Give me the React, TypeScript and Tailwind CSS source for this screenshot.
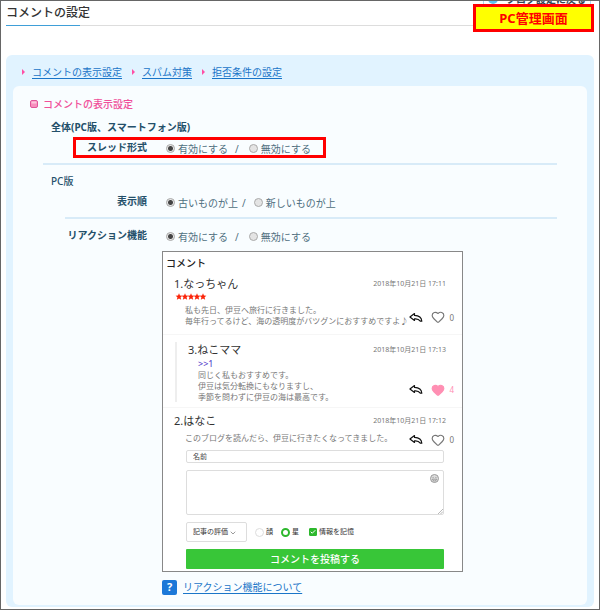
import type { ReactNode } from 'react';
import { Check, ChevronDown, Heart } from 'lucide-react';

const navLinks = ['コメントの表示設定', 'スパム対策', '拒否条件の設定'];

function ReplyIcon() {
  return (
    <svg width="14" height="11" viewBox="0 0 14 11" fill="none" stroke="#111" strokeWidth="1.2" strokeLinejoin="round">
      <path d="M5.500 1.600.9 5l4.600 3.400V6.900c2.500-.3 4.500.4 5.800 2.300h1.500C12.600 5.600 10 3.500 5.500 3.400Z" />
    </svg>
  );
}

function Stars() {
  return (
    <div className="flex h-2 items-center pl-0.5" role="img" aria-label="5">
      {[1, 2, 3, 4, 5].map(n => (
        <svg key={n} width="6" height="7" viewBox="0 0 10 10" overflow="visible" fill="#fb2409">
          <path d="M5-.6 6.600 3.200l4.100.4-3.100 2.700 1 4L5 8.200 1.400 10.300l1-4L-.7 3.600l4.100-.4Z" />
        </svg>
      ))}
    </div>
  );
}

interface CommentProps {
  title: string;
  date: string;
  likes: number;
  liked?: boolean;
  children: ReactNode;
}

function CommentHead({ title, date }: { title: string; date: string }) {
  return (
    <div className="flex items-center justify-between pr-4">
      <h4 className="text-[11px] leading-4 text-[#333]">{title}</h4>
      <time className="text-[7px] leading-4 text-[#777]">{date}</time>
    </div>
  );
}

function CommentBody({ likes, liked, children }: Omit<CommentProps, 'title' | 'date'>) {
  return (
    <div className="flex items-center justify-between pr-2 text-[8px] leading-[11px] text-[#777]">
      <div className="whitespace-nowrap">{children}</div>
      <div className={liked ? 'flex h-[11px] items-center gap-2 pt-2' : 'flex h-[11px] items-center gap-2 pt-1'}>
        <button type="button" aria-label="返信">
          <ReplyIcon />
        </button>
        <button
          type="button"
          className={liked ? 'flex items-center gap-1 text-[#ff8fb3]' : 'flex items-center gap-1 text-[#777]'}
        >
          <Heart size={14} strokeWidth={2} fill={liked ? '#ff8fb3' : 'none'} />
          {likes}
        </button>
      </div>
    </div>
  );
}

interface RadioPairProps {
  name: string;
  first: string;
  second: string;
  tight?: boolean;
}

const radioClass =
  'size-[9px] appearance-none rounded-full border border-[#aaa] bg-[#e4e4e4] checked:bg-[radial-gradient(circle,#444_2px,#e8e8e8_3px)]';

function RadioPair({ name, first, second, tight }: RadioPairProps) {
  return (
    <div className={tight ? 'flex items-center gap-1 pt-[3px]' : 'flex items-center gap-[7px] pt-[3px]'}>
      <label className="flex items-center gap-[3px]">
        <input type="radio" name={name} defaultChecked className={radioClass} />
        {first}
      </label>
      <span className={tight ? 'pr-1' : 'pr-[3px]'}>/</span>
      <label className="flex items-center gap-[3px]">
        <input type="radio" name={name} className={radioClass} />
        {second}
      </label>
    </div>
  );
}

function SettingRow({ label, children }: { label: string; children: ReactNode }) {
  return (
    <div className="flex h-4 gap-[19px]">
      <div className="w-[104px] text-right font-bold text-[#24506a]">{label}</div>
      {children}
    </div>
  );
}

function CommentPreview() {
  return (
    <div className="ml-[119px] mt-2 w-[301px] border border-[#888] bg-white pb-0.5 pt-[3px]">
      <h3 className="pl-[3px] text-[10px] font-medium leading-4 text-[#222]">コメント</h3>

      <article className="border-b border-[#f6f6f6] pb-2 pl-[11px] pt-[5px]">
        <CommentHead title="1.なっちゃん" date="2018年10月21日 17:11" />
        <Stars />
        <div className="pl-[11px] pt-1">
          <CommentBody likes={0}>
            私も先日、伊豆へ旅行に行きました。
            <br />
            毎年行ってるけど、海の透明度がバツグンにおすすめですよ♪
          </CommentBody>
        </div>
      </article>

      <article className="border-b border-[#f6f6f6] pb-[5px] pl-3 pt-[7px]">
        <div className="border-l-2 border-[#eee] pl-[11px]">
          <CommentHead title="3.ねこママ" date="2018年10月21日 17:13" />
          <div className="pl-[10px]">
            <a href="#comment-1" className="block text-[9px] leading-[11px] text-[#4a35c8]">
              &gt;&gt;1
            </a>
            <CommentBody likes={4} liked>
              同じく私もおすすめです。
              <br />
              伊豆は気分転換にもなりますし、
              <br />
              季節を問わずに伊豆の海は最高です。
            </CommentBody>
          </div>
        </div>
      </article>

      <article className="pl-[11px] pt-[5px]">
        <CommentHead title="2.はなこ" date="2018年10月21日 17:12" />
        <div className="pl-[11px] pt-[3px]">
          <CommentBody likes={0}>このブログを読んだら、伊豆に行きたくなってきました。</CommentBody>
        </div>
      </article>

      <form className="mt-[7px] flex flex-col gap-[7px] pl-[23px] pr-[18px] text-[7px] text-[#333]">
        <input
          type="text"
          aria-label="名前"
          placeholder="名前"
          className="h-[13px] rounded-xs border border-[#ddd] px-1.5 placeholder:text-[#444]"
        />
        <div className="relative">
          <textarea
            aria-label="本文"
            className="block h-[45px] w-full resize-none rounded-xs border border-[#ddd]"
          />
          <svg className="absolute right-[5px] top-1" width="9" height="9" viewBox="0 0 9 9">
            <circle cx="4.500" cy="4.500" r="4" fill="#ddd" stroke="#999" />
            <path d="M2.400 3.800q.7-1 1.400 0M5.200 3.800q.7-1 1.400 0M2.400 5.200h4.200q-.4 1.800-2.100 1.800T2.400 5.200Z" fill="none" stroke="#888" strokeWidth=".7" />
          </svg>
          <svg className="absolute bottom-px right-px" width="5" height="5" viewBox="0 0 5 5" stroke="#999" strokeWidth=".7">
            <path d="M0 5 5 0M2.500 5 5 2.500" />
          </svg>
        </div>
        <div className="flex h-5 items-center">
          <div className="relative mr-2">
            <select
              aria-label="記事の評価"
              className="block h-5 w-[61px] appearance-none rounded-xs border border-[#ddd] bg-white pl-1.5"
            >
              <option>記事の評価</option>
            </select>
            <ChevronDown size={8} strokeWidth={2} className="pointer-events-none absolute right-2.5 top-[7px] text-[#666]" />
          </div>
          <label className="mr-2 flex items-center gap-0.5">
            <input type="radio" name="rating" className="size-[9px] appearance-none rounded-full border border-[#ddd]" />
            顔
          </label>
          <label className="mr-2.5 flex items-center gap-0.5">
            <input
              type="radio"
              name="rating"
              defaultChecked
              className="size-[9px] appearance-none rounded-full border-2 border-[#2db82d]"
            />
            星
          </label>
          <label className="relative flex items-center gap-0.5">
            <input
              type="checkbox"
              defaultChecked
              className="size-2 appearance-none rounded-[1px] border border-[#2db82d] checked:bg-[#2db82d]"
            />
            <Check size={6} strokeWidth={4} className="pointer-events-none absolute left-px text-white" />
            情報を記憶
          </label>
        </div>
        <button type="button" className="h-5 rounded-[1px] bg-[#38c638] text-[10px] font-medium text-white">
          コメントを投稿する
        </button>
      </form>
    </div>
  );
}

export default function App() {
  return (
    <div className="relative min-h-screen overflow-hidden border border-[#666] bg-white px-[5px] font-['Noto_Sans','Noto_Sans_CJK_JP',sans-serif] text-[10px] leading-4 text-[#4f6f80]">
      {/* Header */}
      <header className="pt-1">
        <h1 className="pb-1 text-[12px] font-medium leading-4 text-[#333]">コメントの設定</h1>
        <div className="flex h-px">
          <div className="w-[74px] bg-[#3f9fd8]" />
          <div className="flex-1 bg-[#ddd]" />
        </div>
      </header>

      {/* Button cut off by the top edge, with the screen label over it */}
      <button
        type="button"
        className="absolute -top-3 right-2 flex h-5 w-[108px] items-center justify-center gap-2 border border-[#a9d4ee] text-[10px] font-bold text-[#345]"
      >
        <span className="size-2.5 rounded-full bg-[#5bc0ee]" />
        ブログ設定に戻る
      </button>
      <div className="absolute right-[5px] top-[3px] flex h-7 w-[121px] items-center justify-center border-3 border-[#f00] bg-[#ff0] text-[13px] font-bold text-[#f00]">
        PC管理画面
      </div>

      <main className="mt-[29px] rounded-md bg-[#e1f3ff] px-[7px] pb-0.5 pt-[9px]">
        <nav className="pb-1.5 pl-[9px]">
          <ul className="flex gap-2.5">
            {navLinks.map(link => (
              <li key={link} className="flex items-center gap-[7px]">
                <svg width="3" height="6" viewBox="0 0 3 6" fill="#ff4fa5">
                  <path d="M0 0v6l3-3Z" />
                </svg>
                <a href="#settings" className="text-[#1a75c8] underline underline-offset-2">
                  {link}
                </a>
              </li>
            ))}
          </ul>
        </nav>

        <section id="settings" className="rounded-md bg-[#f9fdff] pb-2.5 pl-[17px] pr-[30px] pt-2.5">
          <h2 className="flex items-center gap-[5px] font-medium text-[#f0509a]">
            <svg width="8" height="8" viewBox="0 0 8 8">
              <rect x=".5" y=".5" width="7" height="7" rx="1.500" fill="#f78fbd" stroke="#e0559a" />
              <path d="M1.500 1.500h5v2h-5Z" fill="#fcc5dc" />
            </svg>
            コメントの表示設定
          </h2>

          <div className="ml-[13px]">
            <h3 className="mt-[7px] pl-2 font-bold text-[#24506a]">全体(PC版、スマートフォン版)</h3>
            <div className="relative mt-1">
              <SettingRow label="スレッド形式">
                <RadioPair name="thread" first="有効にする" second="無効にする" />
              </SettingRow>
              <div className="pointer-events-none absolute -top-0.5 left-[30px] h-[21px] w-[253px] border-3 border-[#f00]" />
            </div>
            <hr className="mt-2 border-t-2 border-[#d8ebf8]" />

            <h3 className="mt-2 pl-2 font-medium text-[#24506a]">PC版</h3>
            <div className="mt-1">
              <SettingRow label="表示順">
                <RadioPair name="order" first="古いものが上" second="新しいものが上" tight />
              </SettingRow>
            </div>
            <hr className="ml-[22px] mt-2 border-t-2 border-[#d8ebf8]" />

            <div className="mt-2">
              <SettingRow label="リアクション機能">
                <RadioPair name="reaction" first="有効にする" second="無効にする" />
              </SettingRow>
            </div>
            <CommentPreview />

            <div className="ml-[119px] mt-[7px] flex items-center gap-1.5">
              <span className="flex size-[15px] items-center justify-center rounded-xs bg-[#1c78d8] text-[11px] font-bold text-white">
                ?
              </span>
              <a href="#reaction" className="text-[#1a75c8] underline underline-offset-2">
                リアクション機能について
              </a>
            </div>
          </div>
        </section>
      </main>
    </div>
  );
}
